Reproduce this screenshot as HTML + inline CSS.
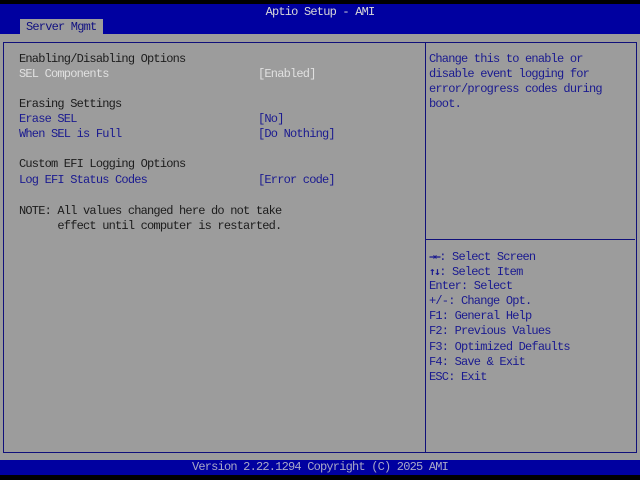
<!DOCTYPE html>
<html><head><meta charset="utf-8"><style>
html,body{margin:0;padding:0;}
body{width:640px;height:480px;background:#000;position:relative;overflow:hidden;font-family:"Liberation Mono","DejaVu Sans Mono",monospace;font-size:12px;letter-spacing:-0.8px;}
.t{position:absolute;line-height:15px;height:15px;white-space:pre;color:#1c1c1c;}
.b{color:#1a1a90;}
.w{color:#e0e0e0;}
.ar{font-family:"DejaVu Sans Mono",monospace;font-size:11px;font-weight:bold;letter-spacing:-1.5px;}
#hdr{position:absolute;left:0;top:4px;width:640px;height:30px;background:#0000a0;}
#main{position:absolute;left:0;top:34px;width:640px;height:426px;background:#9c9c9c;}
#ftr{position:absolute;left:0;top:460px;width:640px;height:15px;background:#0000a0;}
.box{position:absolute;border:1px solid #10107a;}
</style></head><body>
<div id="hdr"></div>
<div class="t" style="left:0;top:5px;width:640px;text-align:center;color:#d8d8d8;">Aptio Setup - AMI</div>
<div style="position:absolute;left:20px;top:19px;width:83px;height:15px;background:#9c9c9c;"></div>
<div class="t" style="left:26px;top:20px;color:#101080;">Server Mgmt</div>
<div id="main"></div>
<div class="box" style="left:3px;top:42px;width:421px;height:409px;"></div>
<div class="box" style="left:425px;top:42px;width:210px;height:409px;"></div>
<div style="position:absolute;left:426px;top:239px;width:209px;height:1px;background:#10107a;"></div>

<div class="t" style="left:19px;top:52px;">Enabling/Disabling Options</div>
<div class="t w" style="left:19px;top:67px;">SEL Components</div>
<div class="t w" style="left:258px;top:67px;">[Enabled]</div>
<div class="t" style="left:19px;top:97px;">Erasing Settings</div>
<div class="t b" style="left:19px;top:112px;">Erase SEL</div>
<div class="t b" style="left:258px;top:112px;">[No]</div>
<div class="t b" style="left:19px;top:127px;">When SEL is Full</div>
<div class="t b" style="left:258px;top:127px;">[Do Nothing]</div>
<div class="t" style="left:19px;top:157px;">Custom EFI Logging Options</div>
<div class="t b" style="left:19px;top:173px;">Log EFI Status Codes</div>
<div class="t b" style="left:258px;top:173px;">[Error code]</div>
<div class="t" style="left:19px;top:204px;">NOTE: All values changed here do not take</div>
<div class="t" style="left:19px;top:219px;">      effect until computer is restarted.</div>

<div class="t b" style="left:429px;top:52px;">Change this to enable or</div>
<div class="t b" style="left:429px;top:67px;">disable event logging for</div>
<div class="t b" style="left:429px;top:82px;">error/progress codes during</div>
<div class="t b" style="left:429px;top:97px;">boot.</div>

<div class="t b" style="left:429px;top:249px;"><span class="ar">→←</span>: Select Screen</div>
<div class="t b" style="left:429px;top:264px;"><span class="ar">↑↓</span>: Select Item</div>
<div class="t b" style="left:429px;top:279px;">Enter: Select</div>
<div class="t b" style="left:429px;top:294px;">+/-: Change Opt.</div>
<div class="t b" style="left:429px;top:309px;">F1: General Help</div>
<div class="t b" style="left:429px;top:324px;">F2: Previous Values</div>
<div class="t b" style="left:429px;top:340px;">F3: Optimized Defaults</div>
<div class="t b" style="left:429px;top:355px;">F4: Save &amp; Exit</div>
<div class="t b" style="left:429px;top:370px;">ESC: Exit</div>

<div id="ftr"></div>
<div class="t" style="left:0;top:460px;width:640px;text-align:center;color:#a8a8c8;">Version 2.22.1294 Copyright (C) 2025 AMI</div>
</body></html>
